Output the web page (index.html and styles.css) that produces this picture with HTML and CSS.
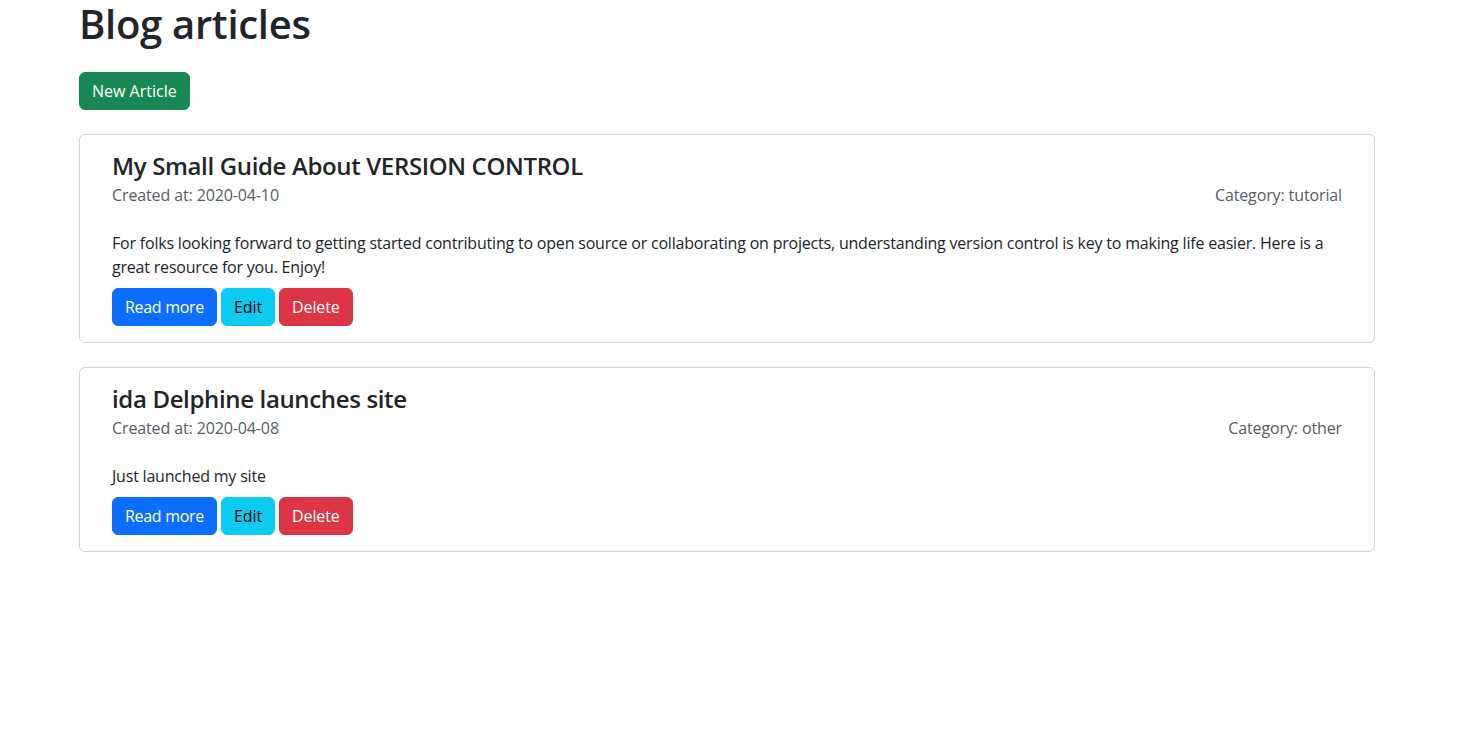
FILE: index.html
```html
<!DOCTYPE html>
<html lang="en">
<head>
<meta charset="utf-8">
<title>Blog articles</title>
<link rel="stylesheet" href="styles.css">
</head>
<body>
<main class="page">
  <h1 class="page-title">Blog articles</h1>
  <div class="toolbar">
    <a class="btn btn-success" href="#">New Article</a>
  </div>

  <article class="card">
    <h4 class="card-title">My Small Guide About VERSION CONTROL</h4>
    <div class="meta">
      <span>Created at: 2020-04-10</span>
      <span>Category: tutorial</span>
    </div>
    <p class="card-text">For folks looking forward to getting started contributing to open source or collaborating on projects, understanding version control is key to making life easier. Here is a great resource for you. Enjoy!</p>
    <div class="actions">
      <a class="btn btn-primary" href="#">Read more</a>
      <a class="btn btn-info" href="#">Edit</a>
      <button class="btn btn-danger" type="button">Delete</button>
    </div>
  </article>

  <article class="card">
    <h4 class="card-title">ida Delphine launches site</h4>
    <div class="meta">
      <span>Created at: 2020-04-08</span>
      <span>Category: other</span>
    </div>
    <p class="card-text">Just launched my site</p>
    <div class="actions">
      <a class="btn btn-primary" href="#">Read more</a>
      <a class="btn btn-info" href="#">Edit</a>
      <button class="btn btn-danger" type="button">Delete</button>
    </div>
  </article>
</main>
</body>
</html>
```

FILE: styles.css
```css
* { box-sizing: border-box; }

body {
  margin: 0;
  font-family: "Open Sans", "Noto Sans", sans-serif;
  font-size: 16px;
  line-height: 1.5;
  letter-spacing: -0.12px;
  color: #212529;
  background: #fff;
}

.page {
  width: 1296px;
  margin-left: 79px;
}

.page-title {
  margin: 0;
  font-size: 40px;
  font-weight: 600;
  line-height: 48px;
  letter-spacing: -0.3px;
}

.toolbar {
  margin: 24px 0;
  display: flex;
}

.btn {
  display: inline-block;
  padding: 6px 12px;
  font-family: inherit;
  font-size: 16px;
  line-height: 24px;
  letter-spacing: -0.1px;
  border: 1px solid transparent;
  border-radius: 6px;
  text-decoration: none;
  color: #fff;
  cursor: pointer;
}

.btn-success { background: #198754; border-color: #198754; letter-spacing: 0; }
.btn-primary { background: #0d6efd; border-color: #0d6efd; letter-spacing: -0.3px; }
.btn-info { background: #0dcaf0; border-color: #0dcaf0; color: #000; }
.btn-danger { background: #dc3545; border-color: #dc3545; }

.card {
  border: 1px solid #d3d3d3;
  border-radius: 6px;
  padding: 16px 32px;
  margin-bottom: 24px;
}

.card-title {
  margin: 0 0 3px;
  font-size: 24px;
  font-weight: 600;
  line-height: 29px;
  letter-spacing: -0.35px;
}

.meta {
  display: flex;
  justify-content: space-between;
  color: #595c5f;
  line-height: 24px;
}

.card-text {
  margin: 24px 0 9px;
  letter-spacing: -0.2px;
}

.actions {
  display: flex;
  gap: 4px;
}
```
